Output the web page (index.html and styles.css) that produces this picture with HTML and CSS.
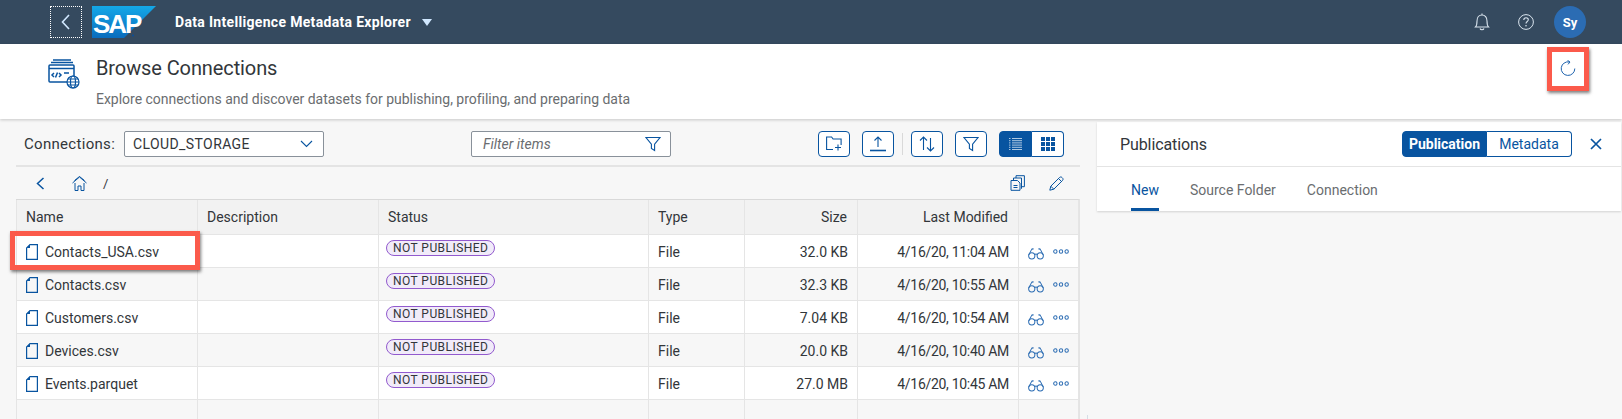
FILE: index.html
```html
<!DOCTYPE html>
<html lang="en">
<head>
    <meta charset="UTF-8">
    <title>Browse Connections</title>
    <link rel="stylesheet" href="styles.css">
</head>
<body>
    <svg class="defs" width="0" height="0">
        <symbol id="file" viewBox="0 0 12 16"><path d="M4 .6h7.4v14.8H.6V4z" fill="none" stroke="currentColor" stroke-width="1.2"/><path d="M4 .6V4H.6z" fill="currentColor"/></symbol>
        <symbol id="glasses" viewBox="0 0 17 14"><g fill="none" stroke="currentColor" stroke-width="1.1"><circle cx="4" cy="10" r="3.3"/><circle cx="13" cy="10" r="3.3"/><path d="M7 8.600c1-.7 2-.7 3 0M.9 9 3.600 3.700C4 2.700 5 2.500 6 2.700M16.100 9 13.400 3.700C13 2.700 12 2.500 11 2.700"/></g></symbol>
        <symbol id="dots" viewBox="0 0 17 5"><g fill="none" stroke="currentColor" stroke-width="1.1"><circle cx="2.5" cy="2.5" r="1.8"/><circle cx="8.5" cy="2.5" r="1.8"/><circle cx="14.5" cy="2.5" r="1.8"/></g></symbol>
        <symbol id="funnel" viewBox="0 0 16 16"><path d="M1 1.5h14L9.6 8.2v6.3l-3.200-2V8.200z" fill="none" stroke="currentColor" stroke-width="1.1"/></symbol>
    </svg>

    <header class="shell">
        <button class="shell-back">
            <svg width="10" height="16" viewBox="0 0 10 16"><path d="M8 1 1.500 8 8 15" fill="none" stroke="#d1e8ff" stroke-width="1.600"/></svg>
        </button>
        <svg class="sap-logo" width="64" height="32" viewBox="0 0 64 32">
            <defs><linearGradient id="sapBlue" x1="0" y1="0" x2="0" y2="1"><stop offset="0" stop-color="#14a8e8"/><stop offset="1" stop-color="#0a6cbd"/></linearGradient></defs>
            <polygon points="0,0 64,0 32,32 0,32" fill="url(#sapBlue)"/>
            <text x="1" y="27" class="sap-text">SAP</text>
            <circle cx="41" cy="29.500" r="1" fill="#0a4f9e"/>
        </svg>
        <span class="shell-title">Data Intelligence Metadata Explorer</span>
        <svg class="shell-caret" width="10" height="7" viewBox="0 0 10 7"><path d="M0 0h10L5 7z" fill="#d1e8ff"/></svg>
        <div class="shell-right">
            <svg width="16" height="18" viewBox="0 0 16 18"><path d="M1.500 14c1.500-1.500 1.500-3 1.500-6 0-3.500 2-6 5-6s5 2.500 5 6c0 3 0 4.500 1.500 6zM6 15.500c.5 1.600 3.500 1.600 4 0M8 .5V2" fill="none" stroke="#d9e4ee" stroke-width="1.100"/></svg>
            <svg class="help" width="16" height="16" viewBox="0 0 16 16"><circle cx="8" cy="8" r="7.400" fill="none" stroke="#d9e4ee" stroke-width="1"/><path d="M5.800 6c0-3 4.500-3 4.500-.2 0 1.800-2.300 1.700-2.300 3.700" fill="none" stroke="#d9e4ee" stroke-width="1.100"/><circle cx="8" cy="11.800" r=".8" fill="#d9e4ee"/></svg>
            <span class="avatar">Sy</span>
        </div>
    </header>

    <section class="page-head">
        <svg class="page-icon" width="32" height="30" viewBox="0 0 32 30">
            <g fill="none" stroke="#0854a0" stroke-width="1.500">
                <path d="M5 1h18M3 3.500h22"/>
                <rect x="1" y="6" width="25" height="17" rx="1"/>
                <path d="M1 9.500h25"/>
                <path d="M6 14l-2 2 2 2M11 14l2 2-2 2M9.500 13.500l-2 5M16 14h5"/>
            </g>
            <g fill="none" stroke="#0854a0" stroke-width="1.200">
                <circle cx="25" cy="23" r="6" fill="#fff"/>
                <ellipse cx="25" cy="23" rx="2.500" ry="6"/>
                <path d="M19 23h12M20 20h10M20 26h10"/>
            </g>
        </svg>
        <div>
            <h1>Browse Connections</h1>
            <p>Explore connections and discover datasets for publishing, profiling, and preparing data</p>
        </div>
        <svg class="refresh" width="16" height="16" viewBox="0 0 16 16"><path d="M9.500 2A6.800 6.800 0 1 0 14.800 8.500M7.500.3l2.500 1.700-2 2.400" fill="none" stroke="#1d62ad" stroke-width="1"/></svg>
        <div class="callout callout-refresh"></div>
    </section>

    <main class="content">
        <section class="browser">
            <div class="toolbar">
                <label class="conn-label">Connections:</label>
                <div class="field select">
                    <span>CLOUD_STORAGE</span>
                    <svg width="13" height="8" viewBox="0 0 13 8"><path d="M1 1l5.500 5.500L12 1" fill="none" stroke="#0854a0" stroke-width="1.100"/></svg>
                </div>
                <div class="field filter">
                    <span>Filter items</span>
                    <svg class="blue" width="16" height="16"><use href="#funnel"/></svg>
                </div>
                <div class="tools">
                    <button class="tool">
                        <svg width="16" height="15" viewBox="0 0 16 15"><path d="M7 13.500H.6V1h5l1.500 2h8v6M9 11.500h6M12 8.500v6" fill="none" stroke="currentColor" stroke-width="1.100"/></svg>
                    </button>
                    <button class="tool">
                        <svg width="16" height="16" viewBox="0 0 16 16"><path d="M8 11V1M4.500 4.500 8 1l3.500 3.500" fill="none" stroke="currentColor" stroke-width="1.100"/><path d="M0 14.500h16" stroke="currentColor" stroke-width="1.600"/></svg>
                    </button>
                    <span class="sep"></span>
                    <button class="tool">
                        <svg width="16" height="16" viewBox="0 0 16 16"><path d="M4.500 14V1M1 4.500 4.500 1 8 4.500M11.500 2v13M8 11.500l3.500 3.500 3.500-3.500" fill="none" stroke="currentColor" stroke-width="1.100"/></svg>
                    </button>
                    <button class="tool"><svg width="16" height="16"><use href="#funnel"/></svg></button>
                    <div class="switch">
                        <button class="on">
                            <svg width="13" height="12" viewBox="0 0 13 12"><path d="M3 .5h10M3 2.700h10M3 4.900h10M3 7.100h10M3 9.300h10M3 11.500h10" stroke="#dbe7f3" stroke-width=".8"/><path d="M0 .5h1.500M0 2.700h1.500M0 4.900h1.500M0 7.100h1.500M0 9.300h1.500M0 11.500h1.500" stroke="#dbe7f3" stroke-width=".8"/></svg>
                        </button>
                        <button>
                            <svg width="14" height="14" viewBox="0 0 14 14" fill="currentColor"><path d="M0 0h4v4H0zM5 0h4v4H5zM10 0h4v4h-4zM0 5h4v4H0zM5 5h4v4H5zM10 5h4v4h-4zM0 10h4v4H0zM5 10h4v4H5zM10 10h4v4h-4z"/></svg>
                        </button>
                    </div>
                </div>
            </div>

            <div class="crumbs">
                <svg class="blue crumb-back" width="9" height="13" viewBox="0 0 9 13"><path d="M7.500 1 1.500 6.500l6 5.500" fill="none" stroke="currentColor" stroke-width="1.500"/></svg>
                <svg class="blue crumb-home" width="15" height="15" viewBox="0 0 15 15"><path d="M.5 7 7.500 1l7 6M2.500 4.500 7.500.5 12.500 4.500M3 7v7.500h3V10h3v4.500h3V7" fill="none" stroke="currentColor" stroke-width="1"/></svg>
                <span class="slash">/</span>
                <div class="crumb-tools">
                    <svg class="blue" width="15" height="16" viewBox="0 0 15 16"><path d="M6 3V.7h8.400v11H12M3.500 5.500V3H11.500v10.500H12M1 5.500h6.500l2.500 2.500v7.300H1zM3.500 10.500h4M3.500 12.500h4" fill="none" stroke="currentColor" stroke-width="1"/></svg>
                    <svg class="blue" width="15" height="15" viewBox="0 0 15 15"><path d="M.8 14.200l1-4L10.500 1.500c.7-.7 1.800-.7 2.500 0l.5.5c.7.7.7 1.800 0 2.500L4.800 13.200zM1.800 10.200l3 3M9.500 2.500l3 3" fill="none" stroke="currentColor" stroke-width="1"/></svg>
                </div>
            </div>

            <div class="table-wrap">
                <table>
                    <colgroup>
                        <col class="c-name"><col class="c-desc"><col class="c-status"><col class="c-type"><col class="c-size"><col class="c-date"><col class="c-act">
                    </colgroup>
                    <tr>
                        <th>Name</th><th>Description</th><th>Status</th><th>Type</th><th class="num">Size</th><th class="num">Last Modified</th><th></th>
                    </tr>
                    <tr>
                        <td><span class="fname"><svg class="blue" width="12" height="16"><use href="#file"/></svg>Contacts_USA.csv</span></td><td></td>
                        <td><span class="tag">NOT PUBLISHED</span></td><td>File</td><td class="num">32.0 KB</td><td class="num date">4/16/20, 11:04 AM</td>
                        <td><span class="acts"><svg width="17" height="14"><use href="#glasses"/></svg><svg width="17" height="5"><use href="#dots"/></svg></span></td>
                    </tr>
                    <tr>
                        <td><span class="fname"><svg class="blue" width="12" height="16"><use href="#file"/></svg>Contacts.csv</span></td><td></td>
                        <td><span class="tag">NOT PUBLISHED</span></td><td>File</td><td class="num">32.3 KB</td><td class="num date">4/16/20, 10:55 AM</td>
                        <td><span class="acts"><svg width="17" height="14"><use href="#glasses"/></svg><svg width="17" height="5"><use href="#dots"/></svg></span></td>
                    </tr>
                    <tr>
                        <td><span class="fname"><svg class="blue" width="12" height="16"><use href="#file"/></svg>Customers.csv</span></td><td></td>
                        <td><span class="tag">NOT PUBLISHED</span></td><td>File</td><td class="num">7.04 KB</td><td class="num date">4/16/20, 10:54 AM</td>
                        <td><span class="acts"><svg width="17" height="14"><use href="#glasses"/></svg><svg width="17" height="5"><use href="#dots"/></svg></span></td>
                    </tr>
                    <tr>
                        <td><span class="fname"><svg class="blue" width="12" height="16"><use href="#file"/></svg>Devices.csv</span></td><td></td>
                        <td><span class="tag">NOT PUBLISHED</span></td><td>File</td><td class="num">20.0 KB</td><td class="num date">4/16/20, 10:40 AM</td>
                        <td><span class="acts"><svg width="17" height="14"><use href="#glasses"/></svg><svg width="17" height="5"><use href="#dots"/></svg></span></td>
                    </tr>
                    <tr>
                        <td><span class="fname"><svg class="blue" width="12" height="16"><use href="#file"/></svg>Events.parquet</span></td><td></td>
                        <td><span class="tag">NOT PUBLISHED</span></td><td>File</td><td class="num">27.0 MB</td><td class="num date">4/16/20, 10:45 AM</td>
                        <td><span class="acts"><svg width="17" height="14"><use href="#glasses"/></svg><svg width="17" height="5"><use href="#dots"/></svg></span></td>
                    </tr>
                    <tr class="empty"><td></td><td></td><td></td><td></td><td></td><td></td><td></td></tr>
                </table>
                <div class="callout callout-row"></div>
            </div>
        </section>

        <section class="pubs">
            <div class="pubs-head">
                <h2>Publications</h2>
                <div class="pub-switch">
                    <button class="on">Publication</button>
                    <button>Metadata</button>
                </div>
                <svg class="blue pub-close" width="12" height="12" viewBox="0 0 12 12"><path d="M1 1l10 10M11 1 1 11" stroke="currentColor" stroke-width="1.700"/></svg>
            </div>
            <nav class="tabs">
                <a class="active">New</a>
                <a>Source Folder</a>
                <a>Connection</a>
            </nav>
        </section>
        <span class="split-tick"></span>
    </main>
</body>
</html>
```

FILE: styles.css
```css
* {
    box-sizing: border-box;
}

html, body {
    height: 419px;
    overflow: hidden;
}

body {
    margin: 0;
    background-color: #f7f7f7;
    color: #32363a;
    font-family: Roboto, "Noto Sans", sans-serif;
    font-size: 14px;
}

button {
    font-family: inherit;
    padding: 0;
    cursor: pointer;
}

.defs {
    position: absolute;
}

.blue {
    color: #0854a0;
}

/* shell bar */
.shell {
    display: flex;
    align-items: center;
    height: 44px;
    padding-left: 50px;
    background-color: #354a5f;
}

.shell-back {
    display: flex;
    align-items: center;
    justify-content: center;
    width: 32px;
    height: 32px;
    background: none;
    border: 1px dotted #fff;
}

.sap-logo {
    margin-left: 10px;
}

.sap-text {
    fill: #fff;
    font-family: "Liberation Sans", sans-serif;
    font-size: 26px;
    font-weight: 700;
    letter-spacing: -2px;
}

.shell-title {
    margin-left: 19px;
    color: #fff;
    font-size: 14px;
    font-weight: 700;
    letter-spacing: 0.32px;
    white-space: nowrap;
}

.shell-caret {
    margin-left: 11px;
}

.shell-right {
    display: flex;
    align-items: center;
    margin-left: auto;
    padding-right: 36px;
}

.help {
    margin-left: 28px;
}

.avatar {
    display: flex;
    align-items: center;
    justify-content: center;
    width: 32px;
    height: 32px;
    margin-left: 20px;
    border-radius: 50%;
    background-color: #2b6cb3;
    color: #fff;
    font-size: 13px;
    font-weight: 700;
}

/* page title */
.page-head {
    position: relative;
    display: flex;
    height: 75px;
    padding: 15px 0 0 48px;
    background-color: #fff;
    box-shadow: 0 1px 3px rgba(0, 0, 0, 0.2);
}

.page-icon {
    margin-right: 16px;
}

.page-head h1 {
    margin: -3px 0 0;
    font-size: 20px;
    font-weight: 400;
    letter-spacing: -0.1px;
    line-height: 24px;
}

.page-head p {
    margin: 9px 0 0;
    color: #6a6d70;
    font-size: 14px;
    letter-spacing: -0.02px;
    line-height: 20px;
}

.refresh {
    margin: 1px 46px 0 auto;
}

.callout {
    position: absolute;
    border: 5px solid #fb5a4b;
    box-shadow: 1px 2px 3px rgba(0, 0, 0, 0.5);
}

.callout-refresh {
    top: 3px;
    left: 1547px;
    width: 42px;
    height: 44px;
}

.callout-row {
    top: 31px;
    left: -6px;
    width: 190px;
    height: 39px;
}

/* main area */
.content {
    display: flex;
    align-items: flex-start;
}

.browser {
    width: 1064px;
    margin-left: 16px;
}

.toolbar {
    display: flex;
    align-items: center;
    height: 48px;
    padding: 3px 0 0 8px;
    border-bottom: 2px solid #e4e4e4;
}

.conn-label {
    width: 100px;
    font-size: 15px;
    letter-spacing: 0.3px;
}

.field {
    display: flex;
    align-items: center;
    justify-content: space-between;
    height: 26px;
    background-color: #fff;
    border: 1px solid #89919a;
    border-radius: 2px;
    font-size: 14px;
}

.select {
    width: 200px;
    padding: 0 10px 0 8px;
    letter-spacing: 0.4px;
}

.filter {
    width: 200px;
    margin-left: 147px;
    padding: 0 9px 0 11px;
    color: #6a6d70;
    font-style: italic;
}

.tools {
    display: flex;
    align-items: center;
    margin-left: 147px;
}

.tool {
    display: flex;
    align-items: center;
    justify-content: center;
    width: 32px;
    height: 26px;
    margin-right: 12px;
    background-color: #fff;
    border: 1px solid #0854a0;
    border-radius: 4px;
    color: #0854a0;
}

.sep {
    width: 1px;
    height: 22px;
    margin: 0 8px 0 -4px;
    background-color: #d9d9d9;
}

.switch {
    display: flex;
}

.switch button {
    display: flex;
    align-items: center;
    justify-content: center;
    width: 33px;
    height: 26px;
    background-color: #fff;
    border: 1px solid #0854a0;
    color: #0854a0;
}

.switch button:first-child {
    border-radius: 4px 0 0 4px;
}

.switch button:last-child {
    width: 32px;
    border-left: 0;
    border-radius: 0 4px 4px 0;
}

.switch .on {
    background-color: #0854a0;
}

.crumbs {
    display: flex;
    align-items: center;
    height: 32px;
    padding-left: 20px;
}

.crumb-home {
    margin-left: 27px;
}

.slash {
    margin-left: 16px;
    font-size: 13px;
}

.crumb-tools {
    display: flex;
    align-items: center;
    gap: 24px;
    margin-left: auto;
    padding-right: 16px;
}

/* table */
.table-wrap {
    position: relative;
    height: 230px;
    border-top: 1px solid #d9d9d9;
    border-right: 2px solid #e4e4e4;
}

table {
    width: 1062px;
    table-layout: fixed;
    border-collapse: collapse;
}

.c-name { width: 181px; }
.c-desc { width: 181px; }
.c-status { width: 270px; }
.c-type { width: 96px; }
.c-size { width: 113px; }
.c-date { width: 161px; }
.c-act { width: 60px; }

th, td {
    height: 33px;
    padding: 0 9px;
    border: 1px solid #e5e5e5;
    border-top: 0;
    font-size: 14px;
    font-weight: 400;
    text-align: left;
    white-space: nowrap;
}

th {
    height: 34px;
    background-color: #f2f2f2;
}

td {
    padding-top: 2px;
    background-color: #fff;
}

tr:nth-child(odd) td {
    background-color: #f7f7f7;
}

.num {
    text-align: right;
}

th.num {
    padding-right: 10px;
}

.date {
    letter-spacing: -0.3px;
}

.fname {
    display: flex;
    align-items: center;
    gap: 7px;
}

.tag {
    display: inline-block;
    height: 16px;
    margin: 0 0 7px -2px;
    padding: 0 6px;
    background-color: #f1ebf9;
    border: 1px solid #925ace;
    border-radius: 8px;
    font-size: 12px;
    letter-spacing: 0.45px;
    line-height: 14px;
    vertical-align: middle;
}

.acts {
    display: flex;
    align-items: center;
    gap: 9px;
    color: #2b6cb3;
}

.acts svg:first-child {
    margin-top: 2px;
}

.acts svg:last-child {
    margin-top: -1px;
}

/* publications panel */
.pubs {
    width: 524px;
    height: 89px;
    margin: 3px 0 0 17px;
    background-color: #fff;
    box-shadow: 0 1px 2px rgba(0, 0, 0, 0.15);
}

.pubs-head {
    display: flex;
    align-items: center;
    height: 45px;
    padding: 0 19px 0 23px;
    border-bottom: 1px solid #e4e4e4;
}

.pubs-head h2 {
    margin: 0;
    font-size: 16px;
    font-weight: 400;
    letter-spacing: -0.1px;
}

.pub-switch {
    display: flex;
    margin-left: auto;
}

.pub-switch button {
    height: 26px;
    background-color: #fff;
    border: 1px solid #0854a0;
    color: #0854a0;
    font-size: 14px;
}

.pub-switch button:first-child {
    width: 85px;
    border-radius: 4px 0 0 4px;
}

.pub-switch button:last-child {
    width: 85px;
    border-left: 0;
    border-radius: 0 4px 4px 0;
}

.pub-switch .on {
    background-color: #0854a0;
    color: #fff;
    font-weight: 700;
}

.pub-close {
    margin-left: 18px;
}

.tabs {
    display: flex;
    gap: 31px;
    height: 44px;
    padding-left: 34px;
    color: #6a6d70;
    font-size: 14px;
}

.tabs a {
    height: 44px;
    line-height: 46px;
}

.tabs .active {
    border-bottom: 3px solid #0854a0;
    color: #0854a0;
}

.split-tick {
    position: absolute;
    top: 415px;
    left: 1087px;
    width: 1px;
    height: 4px;
    background-color: #d5dde6;
}
```
